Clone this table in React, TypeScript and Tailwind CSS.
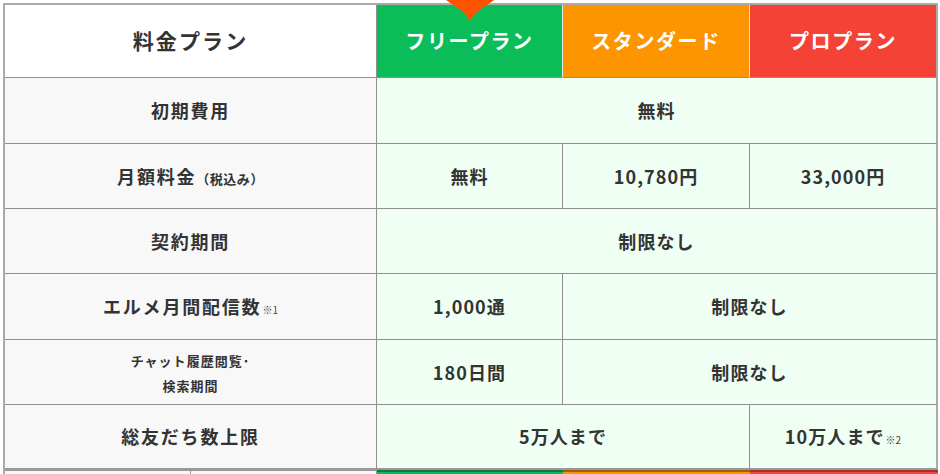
import type { ReactNode } from 'react'

const font = { fontFamily: '"Noto Sans CJK JP", "Noto Sans", sans-serif' }

function Label({ children, className = 'h-[65px] text-[18px] tracking-[0.1em]' }: { children: ReactNode; className?: string }) {
  return (
    <div className={`flex items-center justify-center border-r border-b border-[#8f8f8f] bg-[#f8f8f8] font-bold text-[#333] ${className}`}>
      {children}
    </div>
  )
}

function Value({ children, className = '' }: { children: ReactNode; className?: string }) {
  return (
    <div className={`flex h-[65px] items-center justify-center border-r border-b border-[#8f8f8f] bg-[#effff3] text-[18px] font-bold tracking-[0.06em] text-[#333] ${className}`}>
      <span>{children}</span>
    </div>
  )
}

function Note({ children }: { children: ReactNode }) {
  return <span className="ml-[1px] text-[10px] font-normal tracking-normal text-[#444]">{children}</span>
}

export default function App() {
  return (
    <div className="relative h-[474px] w-[940px] overflow-hidden bg-white pt-[3px] pl-[3px]" style={font}>
      <svg className="absolute top-0 left-[446px] z-10" width="48" height="22" viewBox="0 0 48 22">
        <path d="M0 0 H48 C40 6 30 10 24 21 C18 10 8 6 0 0 Z" fill="#ff5200" />
      </svg>

      <div className="grid w-[935px] grid-cols-[372px_186px_187px_188px] border-t-2 border-l-2 border-[#aaa]">
        <div className="flex h-[73px] items-center justify-center border-r border-b border-[#8f8f8f] bg-white text-[21px] font-bold tracking-[0.1em] text-[#333]">
          料金プラン
        </div>
        <div className="flex h-[73px] items-center justify-center border-r border-b border-r-[#e6e6e6] border-b-[#8f8f8f] bg-[#0bbd59] text-[20px] font-bold tracking-[0.08em] text-white">
          フリープラン
        </div>
        <div className="flex h-[73px] items-center justify-center border-r border-b border-r-[#e6e6e6] border-b-[#8f8f8f] bg-[#fd9500] text-[20px] font-bold tracking-[0.08em] text-white">
          スタンダード
        </div>
        <div className="flex h-[73px] items-center justify-center border-r-2 border-b border-r-[#aaa] border-b-[#8f8f8f] bg-[#f44336] text-[20px] font-bold tracking-[0.08em] text-white">
          プロプラン
        </div>

        <Label className="h-[66px] text-[18px] tracking-[0.1em]">初期費用</Label>
        <Value className="col-span-3 h-[66px] border-r-2 border-r-[#aaa]">無料</Value>

        <Label>
          <span>
            月額料金<span className="text-[13px] tracking-[0.04em]">（税込み）</span>
          </span>
        </Label>
        <Value>無料</Value>
        <Value>10,780円</Value>
        <Value className="border-r-2 border-r-[#aaa]">33,000円</Value>

        <Label>契約期間</Label>
        <Value className="col-span-3 border-r-2 border-r-[#aaa]">制限なし</Value>

        <Label className="h-[66px] text-[18px] tracking-[0.1em]">
          <span>
            エルメ月間配信数<Note>※1</Note>
          </span>
        </Label>
        <Value className="h-[66px]">1,000通</Value>
        <Value className="col-span-2 h-[66px] border-r-2 border-r-[#aaa]">制限なし</Value>

        <Label className="h-[65px] flex-col pt-[2px] text-[13px] leading-[25px] tracking-[0.08em]">
          <span>チャット履歴閲覧･</span>
          <span>検索期間</span>
        </Label>
        <Value>180日間</Value>
        <Value className="col-span-2 border-r-2 border-r-[#aaa]">制限なし</Value>

        <Label className="h-[65px] border-b-2 border-b-[#999] text-[18px] tracking-[0.1em]">総友だち数上限</Label>
        <Value className="col-span-2 border-b-2 border-b-[#999]">5万人まで</Value>
        <Value className="border-r-2 border-b-2 border-r-[#aaa] border-b-[#999]">
          10万人まで<Note>※2</Note>
        </Value>
      </div>

      <div className="grid w-[935px] grid-cols-[186px_186px_186px_187px_188px] border-l-2 border-[#aaa]">
        <div className="h-[20px] border-r border-t border-[#999] bg-[#f8f8f8]" />
        <div className="h-[20px] border-r border-t border-[#999] bg-[#f8f8f8]" />
        <div className="h-[20px] border-t-2 border-[#1b7340] bg-[#0bbd59]" />
        <div className="h-[20px] border-t-2 border-[#a0600b] bg-[#fd9500]" />
        <div className="h-[20px] border-t-2 border-[#a3322a] bg-[#f44336]" />
      </div>
    </div>
  )
}
